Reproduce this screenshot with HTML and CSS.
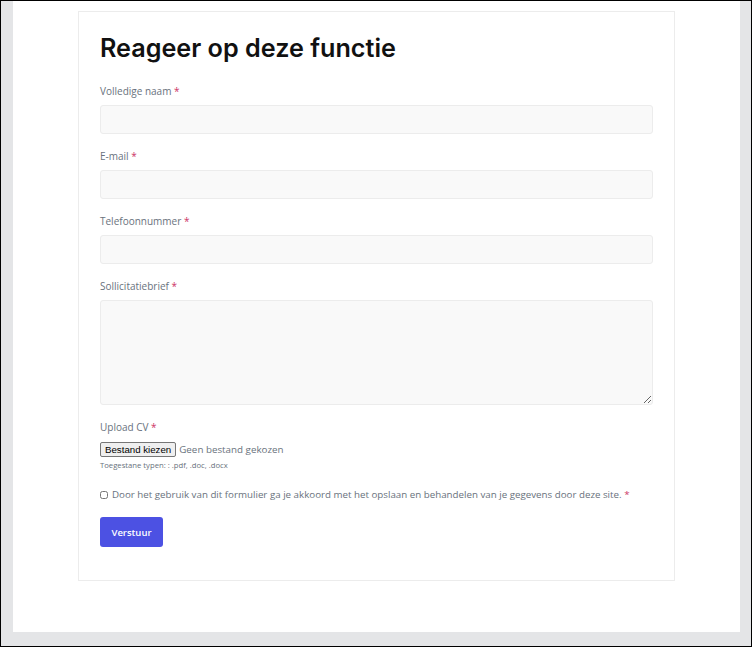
FILE: index.html
```html
<!DOCTYPE html>
<html lang="nl">
  <head>
    <meta charset="UTF-8" />
    <meta name="viewport" content="width=device-width, initial-scale=1.0" />
    <title>Reageer op deze functie</title>
    <link rel="stylesheet" href="styles.css">
  </head>
  <body>
    <div class="page">
      <div class="panel">
        <!-- Sollicitatieformulier -->
        <div class="card">
          <h2 class="title">Reageer op deze functie</h2>
          <form class="apply-form">
            <div class="field">
              <label>Volledige naam <span class="req">*</span></label>
              <input type="text" />
            </div>

            <div class="field">
              <label>E-mail <span class="req">*</span></label>
              <input type="email" />
            </div>

            <div class="field">
              <label>Telefoonnummer <span class="req">*</span></label>
              <input type="tel" />
            </div>

            <div class="field">
              <label>Sollicitatiebrief <span class="req">*</span></label>
              <textarea></textarea>
            </div>

            <div class="field upload">
              <label>Upload CV <span class="req">*</span></label>
              <div class="file-row">
                <button type="button" class="file-btn">Bestand kiezen</button>
                <span class="file-name">Geen bestand gekozen</span>
              </div>
              <p class="hint">Toegestane typen: : .pdf, .doc, .docx</p>
            </div>

            <div class="consent">
              <input type="checkbox" id="consent" />
              <label for="consent">Door het gebruik van dit formulier ga je akkoord met het opslaan en behandelen van je gegevens door deze site. <span class="req">*</span></label>
            </div>

            <button type="submit" class="submit-btn">Verstuur</button>
          </form>
        </div>
      </div>
    </div>
  </body>
</html>
```

FILE: styles.css
```css
* {
  margin: 0;
  padding: 0;
  box-sizing: border-box;
}

body {
  font-family: "Open Sans", "Liberation Sans", sans-serif;
  color: #69727d;
}

.page {
  height: 647px;
  border: 1px solid #000;
  background: #e4e5e7;
  padding: 0 11px 14px 12px;
}

.panel {
  height: 100%;
  background: #fff;
  padding-top: 10px;
}

.card {
  width: 597px;
  margin: 0 auto;
  border: 1px solid #ececec;
  padding: 21px 21px 33px;
}

.title {
  font-family: "Inter", sans-serif;
  font-size: 25.2px;
  font-weight: 600;
  line-height: 31px;
  color: #111;
  margin-bottom: 17px;
}

.field {
  margin-bottom: 12px;
}

.field label {
  display: block;
  font-size: 10px;
  line-height: 20px;
  margin-bottom: 4px;
}

.req {
  color: #c36;
}

input[type="text"],
input[type="email"],
input[type="tel"],
textarea {
  display: block;
  width: 100%;
  height: 29px;
  background: #f9f9f9;
  border: 1px solid #ececec;
  border-radius: 3px;
  font-size: 12px;
}

textarea {
  height: 105px;
  resize: vertical;
}

.file-row {
  display: flex;
  align-items: center;
  height: 17px;
}

.file-btn {
  font-family: "Liberation Sans", Arial, sans-serif;
  font-size: 9.7px;
  color: #000;
  background: #efefef;
  border: 1px solid #767676;
  border-radius: 2px;
  padding: 1px 4px;
  margin-right: 3px;
}

.file-name {
  font-size: 9.8px;
}

.hint {
  font-size: 7.7px;
  line-height: 14px;
}

.upload {
  margin-bottom: 13px;
}

.consent {
  display: flex;
  align-items: center;
  gap: 4px;
  margin-bottom: 12px;
}

.consent input {
  width: 8px;
  height: 8px;
}

.consent label {
  font-size: 9.75px;
  line-height: 20px;
}

.submit-btn {
  width: 63px;
  height: 30px;
  border: none;
  border-radius: 3px;
  background: #4c51e3;
  color: #fff;
  font-family: "Open Sans", sans-serif;
  font-size: 9.5px;
  font-weight: 600;
}
```
